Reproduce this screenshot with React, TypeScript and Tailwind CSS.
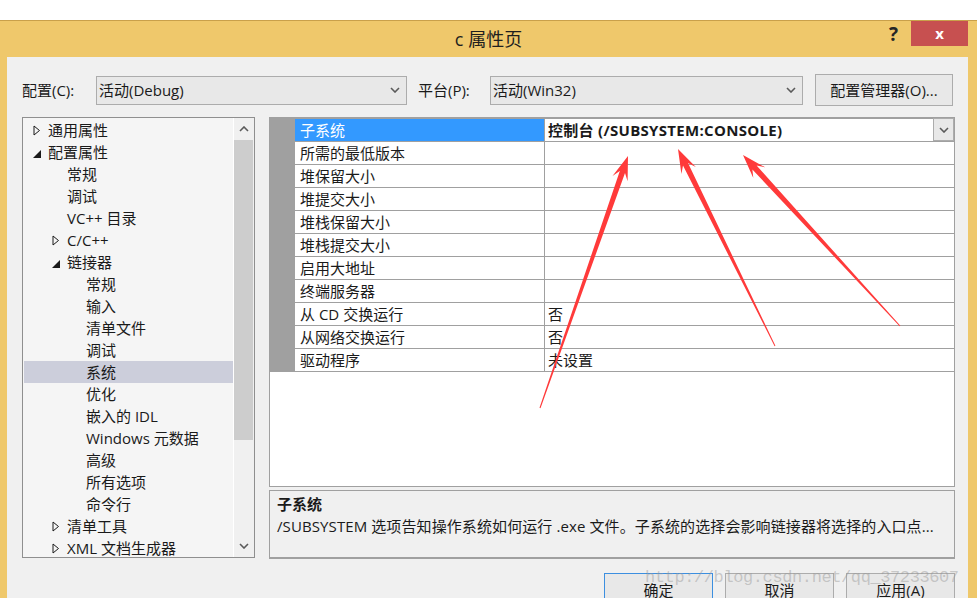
import React from "react";

type TreeItem = { level: number; text: string; exp?: "open" | "closed"; selected?: boolean };

const tree: TreeItem[] = [
  { level: 0, text: "通用属性", exp: "closed" },
  { level: 0, text: "配置属性", exp: "open" },
  { level: 1, text: "常规" },
  { level: 1, text: "调试" },
  { level: 1, text: "VC++ 目录" },
  { level: 1, text: "C/C++", exp: "closed" },
  { level: 1, text: "链接器", exp: "open" },
  { level: 2, text: "常规" },
  { level: 2, text: "输入" },
  { level: 2, text: "清单文件" },
  { level: 2, text: "调试" },
  { level: 2, text: "系统", selected: true },
  { level: 2, text: "优化" },
  { level: 2, text: "嵌入的 IDL" },
  { level: 2, text: "Windows 元数据" },
  { level: 2, text: "高级" },
  { level: 2, text: "所有选项" },
  { level: 2, text: "命令行" },
  { level: 1, text: "清单工具", exp: "closed" },
  { level: 1, text: "XML 文档生成器", exp: "closed" },
];

const indent = ["pl-[10px]", "pl-[29px]", "pl-[48px]"];

const props: [string, string][] = [
  ["子系统", "控制台 (/SUBSYSTEM:CONSOLE)"],
  ["所需的最低版本", ""],
  ["堆保留大小", ""],
  ["堆提交大小", ""],
  ["堆栈保留大小", ""],
  ["堆栈提交大小", ""],
  ["启用大地址", ""],
  ["终端服务器", ""],
  ["从 CD 交换运行", "否"],
  ["从网络交换运行", "否"],
  ["驱动程序", "未设置"],
];

function ChevronDown() {
  return (
    <svg width="10" height="6" viewBox="0 0 10 6">
      <path d="M1 1 L5 5 L9 1" fill="none" stroke="#5a5a5a" strokeWidth="1.6" />
    </svg>
  );
}

function ChevronUp() {
  return (
    <svg width="10" height="6" viewBox="0 0 10 6">
      <path d="M1 5 L5 1 L9 5" fill="none" stroke="#5a5a5a" strokeWidth="1.6" />
    </svg>
  );
}

function Expander({ exp }: { exp?: "open" | "closed" }) {
  if (exp === "closed")
    return (
      <svg width="8" height="11" viewBox="0 0 8 11">
        <path d="M1 1 L6.5 5.5 L1 10 Z" fill="none" stroke="#1a1a1a" strokeWidth="1" />
      </svg>
    );
  if (exp === "open")
    return (
      <svg width="8" height="8" viewBox="0 0 8 8" className="mt-[4px]">
        <path d="M8 0 L8 8 L0 8 Z" fill="#1a1a1a" />
      </svg>
    );
  return null;
}

function arrow(tx: number, ty: number, px: number, py: number) {
  const dx = px - tx;
  const dy = py - ty;
  const len = Math.hypot(dx, dy);
  const ux = dx / len;
  const uy = dy / len;
  const nx = -uy;
  const ny = ux;
  const L = 24;
  const hw = 8;
  const neck = 17;
  const sw = 2.8;
  const pts = [
    [px, py],
    [px - ux * L + nx * hw, py - uy * L + ny * hw],
    [px - ux * neck + nx * sw, py - uy * neck + ny * sw],
    [tx + nx * 0.5, ty + ny * 0.5],
    [tx - nx * 0.5, ty - ny * 0.5],
    [px - ux * neck - nx * sw, py - uy * neck - ny * sw],
    [px - ux * L - nx * hw, py - uy * L - ny * hw],
  ];
  return pts.map((p) => p.map((v) => v.toFixed(1)).join(",")).join(" ");
}

function Combo({ text, w }: { text: string; w: string }) {
  return (
    <div
      className={`${w} h-[29px] border border-[#acacac] bg-[#e8e8e8] flex items-center pl-[2px] pr-[6px]`}
    >
      <span className="flex-1 text-[15px] text-[#1a1a1a]">{text}</span>
      <ChevronDown />
    </div>
  );
}

export default function App() {
  return (
    <div
      className="relative w-[977px] h-[598px] overflow-hidden bg-white flex flex-col"
      style={{ fontFamily: '"Open Sans", "Noto Sans CJK SC", sans-serif' }}
    >
      <div className="h-[20px] shrink-0 bg-white" />
      <div className="flex-1 min-h-0 flex flex-col bg-[#efc86b] border-t border-[#c9a04a]">
        {/* title bar */}
        <div className="h-[36px] shrink-0 flex">
          <div className="w-[97px]" />
          <div className="flex-1 flex items-center justify-center text-[18px] text-[#1e1e1e]">
            c 属性页
          </div>
          <div className="w-[97px] flex items-start">
            <div className="w-[31px] pr-[4px] pt-[2px] text-center text-[19px] font-bold leading-[22px] text-[#262626]">
              ?
            </div>
            <div className="w-[57px] h-[25px] bg-[#c75050] flex items-center justify-center text-white text-[15px] font-bold leading-none">
              x
            </div>
          </div>
        </div>

        {/* client area */}
        <div className="flex-1 min-h-0 ml-[7px] mr-[9px] bg-[#f0f0f0] flex flex-col pt-[17px] pl-[15px] pr-[13px]">
          <div className="h-[32px] flex items-center shrink-0">
            <span className="w-[74px] text-[15px] text-[#1a1a1a]">配置(C):</span>
            <Combo text="活动(Debug)" w="w-[311px]" />
            <span className="ml-[11px] w-[72px] text-[15px] text-[#1a1a1a]">平台(P):</span>
            <Combo text="活动(Win32)" w="w-[313px]" />
            <div className="ml-[12px] w-[138px] h-[32px] border border-[#acacac] bg-[#e8e8e8] flex items-center justify-center text-[15px] text-[#1a1a1a]">
              配置管理器(O)...
            </div>
          </div>

          <div className="mt-[11px] flex shrink-0">
            {/* tree */}
            <div className="w-[233px] h-[441px] border border-[#8f8f8f] bg-[#f5f5f5] flex overflow-hidden">
              <div className="flex-1 pt-[1px] overflow-hidden">
                {tree.map((it, i) => (
                  <div
                    key={i}
                    className={`h-[22px] flex items-center text-[15px] text-[#1a1a1a] whitespace-nowrap ${indent[it.level]} ${
                      it.selected ? "bg-[#cccedb] ml-[1px]" : ""
                    }`}
                  >
                    <div className={`w-[15px] h-[22px] flex items-center ${it.selected ? "-ml-[1px]" : ""}`}>
                      <Expander exp={it.exp} />
                    </div>
                    <span>{it.text}</span>
                  </div>
                ))}
              </div>
              <div className="w-[21px] border-l border-white bg-[#f0f0f0] flex flex-col">
                <div className="h-[22px] flex items-center justify-center">
                  <ChevronUp />
                </div>
                <div className="h-[300px] mr-[1px] bg-[#cdcdcd]" />
                <div className="flex-1" />
                <div className="h-[22px] flex items-center justify-center">
                  <ChevronDown />
                </div>
              </div>
            </div>

            {/* property grid + description */}
            <div className="ml-[14px] w-[686px] flex flex-col">
              <div className="h-[370px] border border-t-2 border-[#a0a0a0] bg-white flex flex-col">
                {props.map(([name, value], i) => (
                  <div key={i} className="h-[23px] flex border-b border-[#a0a0a0] shrink-0">
                    <div className="w-[25px] bg-[#a0a0a0]" />
                    <div
                      className={`w-[250px] border-r border-[#a0a0a0] pl-[5px] text-[15px] leading-[22px] whitespace-nowrap ${
                        i === 0 ? "bg-[#3399ff] text-white" : "text-[#1a1a1a]"
                      }`}
                    >
                      {name}
                    </div>
                    <div className="flex-1 flex pl-[3px] text-[15px] leading-[22px] text-[#1a1a1a] whitespace-nowrap">
                      <span className={`flex-1 ${i === 0 ? "font-bold tracking-[0.3px]" : ""}`}>{value}</span>
                      {i === 0 && (
                        <div className="w-[21px] h-[23px] -mt-[1px] border border-[#acacac] bg-[#e8e8e8] flex items-center justify-center">
                          <ChevronDown />
                        </div>
                      )}
                    </div>
                  </div>
                ))}
              </div>
              <div className="mt-[3px] h-[69px] border border-b-2 border-[#a0a0a0] bg-[#f0f0f0] px-[7px] pt-[2px] text-[15px] leading-[22px] text-[#1a1a1a] whitespace-nowrap">
                <div className="font-bold">子系统</div>
                <div className="tracking-[0.1px]">
                  /SUBSYSTEM 选项告知操作系统如何运行 .exe 文件。子系统的选择会影响链接器将选择的入口点...
                </div>
              </div>
            </div>
          </div>

          <div className="mt-[14px] flex justify-end gap-[12px] shrink-0">
            <div className="w-[109px] h-[32px] border border-[#3c8fe0] bg-[#e8e8e8] flex items-center justify-center text-[15px] text-[#1a1a1a] pt-[2px]">
              确定
            </div>
            <div className="w-[109px] h-[32px] border border-[#acacac] bg-[#e8e8e8] flex items-center justify-center text-[15px] text-[#1a1a1a] pt-[2px]">
              取消
            </div>
            <div className="w-[109px] h-[32px] border border-[#acacac] bg-[#e8e8e8] flex items-center justify-center text-[15px] text-[#1a1a1a] pt-[2px]">
              应用(A)
            </div>
          </div>
        </div>
      </div>

      {/* watermark */}
      <div
        className="absolute left-[645px] top-[565px] text-[17px] tracking-[-0.4px] text-[rgba(150,150,150,0.45)] whitespace-nowrap"
        style={{ fontFamily: '"Liberation Mono", monospace' }}
      >
        http://blog.csdn.net/qq_37233607
      </div>

      {/* annotation arrows */}
      <svg className="absolute inset-0 pointer-events-none" width="977" height="598">
        <polygon points={arrow(540, 408, 628, 156)} fill="#ff3a3a" />
        <polygon points={arrow(775, 346, 678, 149)} fill="#ff3a3a" />
        <polygon points={arrow(900, 326, 743, 155)} fill="#ff3a3a" />
      </svg>
    </div>
  );
}
